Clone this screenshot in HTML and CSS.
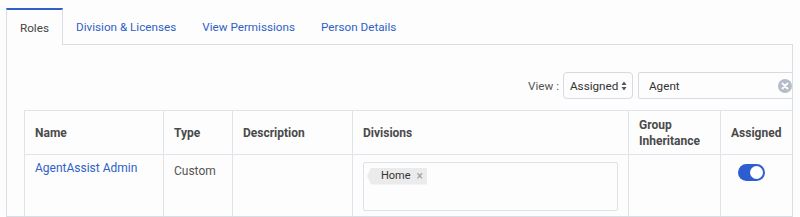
FILE: index.html
```html
<!DOCTYPE html>
<html>
<head>
<meta charset="utf-8">
<link rel="stylesheet" href="styles.css">
</head>
<body>
<div class="page">
  <div class="tabs">
    <div class="tab active">Roles</div>
    <div class="tab">Division &amp; Licenses</div>
    <div class="tab">View Permissions</div>
    <div class="tab">Person Details</div>
    <div class="tab-fill"></div>
  </div>
  <div class="panel">
    <div class="toolbar">
      <span class="view-label">View :</span>
      <div class="select">
        <span>Assigned</span>
        <svg class="arrows" width="6" height="10" viewBox="0 0 6 10"><path d="M3 0.5 L5.5 4 L0.5 4 Z M0.5 6 L5.5 6 L3 9.5 Z" fill="#555"/></svg>
      </div>
      <div class="search">
        <span>Agent</span>
        <svg class="clear" width="14" height="14" viewBox="0 0 14 14"><circle cx="7" cy="7" r="7" fill="#b4bcc7"/><path d="M4.5 4.5 L9.5 9.5 M9.5 4.5 L4.5 9.5" stroke="#fff" stroke-width="1.8" stroke-linecap="round"/></svg>
      </div>
    </div>
    <table class="roles">
      <colgroup>
        <col class="c-name"><col class="c-type"><col class="c-desc"><col class="c-div"><col class="c-group"><col class="c-assigned">
      </colgroup>
      <thead>
        <tr>
          <th>Name</th>
          <th>Type</th>
          <th>Description</th>
          <th>Divisions</th>
          <th>Group Inheritance</th>
          <th>Assigned</th>
        </tr>
      </thead>
      <tbody>
        <tr>
          <td class="name-cell"><a class="role-link">AgentAssist Admin</a></td>
          <td class="type-cell">Custom</td>
          <td></td>
          <td class="div-cell">
            <div class="div-box">
              <span class="tag">Home<span class="tag-x">×</span></span>
            </div>
          </td>
          <td></td>
          <td class="assigned-cell"><span class="toggle"><span class="knob"></span></span></td>
        </tr>
      </tbody>
    </table>
  </div>
</div>
</body>
</html>
```

FILE: styles.css
```css
* { box-sizing: border-box; }
html, body { margin: 0; padding: 0; }
body {
  background: #fdfdfd;
  font-family: Roboto, "Liberation Sans", sans-serif;
  color: #444;
  width: 800px;
  height: 217px;
  overflow: hidden;
}
.page {
  padding: 8px 0 0 6px;
}
.tabs {
  display: flex;
  width: 787px;
  height: 37px;
}
.tab {
  height: 37px;
  padding: 2px 13px 0;
  display: flex;
  align-items: center;
  font-size: 11.7px;
  color: #2f61c8;
  border-bottom: 1px solid #d9dee4;
}
.tab.active {
  color: #444;
  border: 1px solid #d9dee4;
  border-top: 2px solid #2f61c8;
  border-bottom: none;
  background: #fdfdfd;
  padding: 1px 13px 0;
  width: 57px;
}
.tab-fill {
  flex: 1;
  border-bottom: 1px solid #d9dee4;
}
.panel {
  width: 787px;
  height: 172px;
  border: 1px solid #d9dee4;
  border-top: none;
  padding-left: 17px;
  overflow: hidden;
}
.toolbar {
  display: flex;
  justify-content: flex-end;
  align-items: center;
  margin-top: 27px;
  margin-right: -6px;
  height: 27px;
}
.view-label {
  font-size: 11.7px;
  color: #555;
  margin-right: 4px;
}
.select {
  width: 70px;
  height: 27px;
  border: 1px solid #d6dbe1;
  border-radius: 4px;
  display: flex;
  align-items: center;
  justify-content: space-between;
  padding: 0 5px 0 6px;
  font-size: 11.7px;
  color: #333;
  background: #fdfdfd;
}
.search {
  margin-left: 5px;
  width: 160px;
  height: 27px;
  border: 1px solid #d6dbe1;
  border-radius: 2px;
  display: flex;
  align-items: center;
  justify-content: space-between;
  padding: 0 5px 0 10px;
  font-size: 11.7px;
  color: #333;
}
.clear { display: block; }
.roles {
  margin-top: 11px;
  width: 769px;
  table-layout: fixed;
  border-collapse: collapse;
}
.c-name { width: 139px; }
.c-type { width: 69px; }
.c-desc { width: 120px; }
.c-div { width: 276px; }
.c-group { width: 92px; }
.c-assigned { width: 73px; }
.roles th, .roles td {
  border: 1px solid #dfe4ea;
}
.roles th {
  height: 44px;
  padding: 0 10px;
  text-align: left;
  vertical-align: middle;
  font-size: 12px;
  font-weight: 700;
  line-height: 16px;
  color: #4a4a4a;
}
.roles td {
  vertical-align: top;
  font-size: 12px;
  line-height: 16px;
  padding: 0 10px;
  height: 70px;
}
.name-cell { padding-top: 5px !important; }
.role-link { color: #2f61c8; }
.type-cell { padding-top: 8px !important; color: #555; }
.div-cell { padding-top: 7px !important; }
.div-box {
  width: 255px;
  height: 49px;
  border: 1px solid #dde2e8;
  border-radius: 2px;
  padding: 4px 0 0 3px;
  background: #fdfdfd;
}
.tag {
  display: inline-flex;
  align-items: center;
  height: 17px;
  width: 60px;
  padding-left: 14px;
  background: #ebebeb;
  clip-path: polygon(4px 0, 100% 0, 100% 100%, 4px 100%, 0 50%);
  font-size: 11px;
  color: #333;
}
.tag-x {
  margin-left: 6px;
  color: #9a9a9a;
  font-size: 12px;
}
.assigned-cell { padding: 9px 0 0 17px !important; }
.toggle {
  display: block;
  width: 27px;
  height: 17px;
  border-radius: 9px;
  background: #2d5dd0;
  position: relative;
}
.knob {
  position: absolute;
  right: 2px;
  top: 2px;
  width: 13px;
  height: 13px;
  border-radius: 50%;
  background: #fff;
}
```
